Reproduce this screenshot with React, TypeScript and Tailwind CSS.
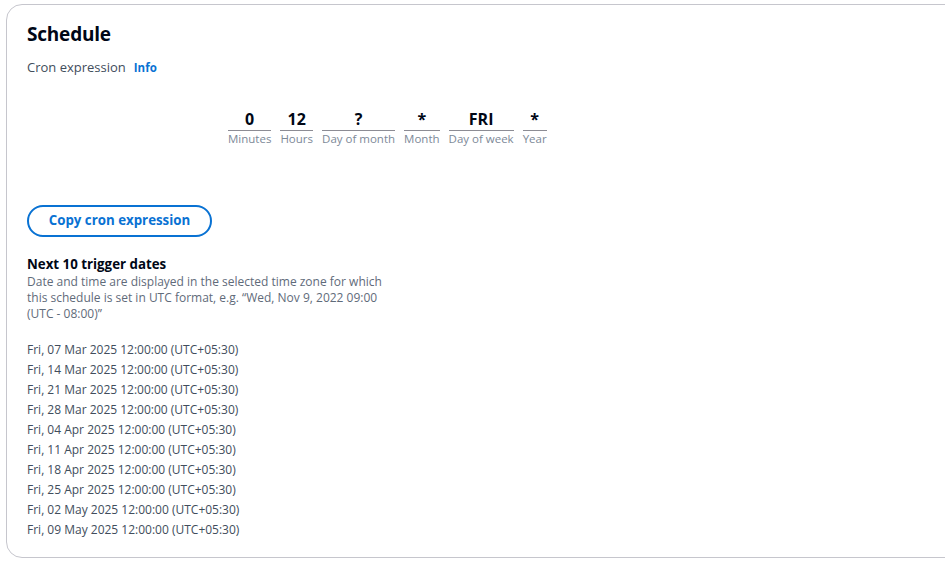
const fields = [
  { value: "0", label: "Minutes" },
  { value: "12", label: "Hours" },
  { value: "?", label: "Day of month" },
  { value: "*", label: "Month" },
  { value: "FRI", label: "Day of week" },
  { value: "*", label: "Year" },
];

const dates = [
  "Fri, 07 Mar 2025 12:00:00 (UTC+05:30)",
  "Fri, 14 Mar 2025 12:00:00 (UTC+05:30)",
  "Fri, 21 Mar 2025 12:00:00 (UTC+05:30)",
  "Fri, 28 Mar 2025 12:00:00 (UTC+05:30)",
  "Fri, 04 Apr 2025 12:00:00 (UTC+05:30)",
  "Fri, 11 Apr 2025 12:00:00 (UTC+05:30)",
  "Fri, 18 Apr 2025 12:00:00 (UTC+05:30)",
  "Fri, 25 Apr 2025 12:00:00 (UTC+05:30)",
  "Fri, 02 May 2025 12:00:00 (UTC+05:30)",
  "Fri, 09 May 2025 12:00:00 (UTC+05:30)",
];

export default function App() {
  return (
    <div
      className="w-[945px] h-[571px] bg-white overflow-hidden pt-[4px] pl-[6px]"
      style={{ fontFamily: '"Open Sans", "Noto Sans", sans-serif' }}
    >
      <div className="w-[960px] h-[554px] rounded-[16px] border border-[#c6c6cd] bg-white pl-[20px] pt-[16px]">
        {/* Header */}
        <h2 className="text-[19px] leading-[26px] font-bold text-[#000716] tracking-[-0.2px]">
          Schedule
        </h2>
        <div className="mt-[12px] flex items-center gap-[8px] h-[18px]">
          <span className="text-[13px] text-[#414d5c]">Cron expression</span>
          <span className="text-[11.5px] font-bold text-[#0972d3]">Info</span>
        </div>

        {/* Cron fields */}
        <div className="mt-[32px] ml-[201px] flex gap-[9px]">
          {fields.map((f) => (
            <div key={f.label} className="flex flex-col items-stretch">
              <div className="text-[16px] leading-[20px] font-bold text-[#000716] text-center border-b border-[#8c8c94] pb-[1px]">
                {f.value}
              </div>
              <div className="text-[11.5px] leading-[16px] text-[#7d8998] whitespace-nowrap">
                {f.label}
              </div>
            </div>
          ))}
        </div>

        {/* Copy button */}
        <button className="mt-[58px] h-[32px] w-[185px] rounded-full border-2 border-[#0972d3] text-[#0972d3] text-[13.3px] font-bold">
          Copy cron expression
        </button>

        {/* Trigger dates */}
        <div className="mt-[18px]">
          <div className="text-[13.3px] leading-[18px] font-bold text-[#000716]">
            Next 10 trigger dates
          </div>
          <p className="mt-[1px] w-[370px] text-[12px] leading-[16px] text-[#5f6b7a]">
            Date and time are displayed in the selected time zone for which
            this schedule is set in UTC format, e.g. “Wed, Nov 9, 2022 09:00
            (UTC - 08:00)”
          </p>
          <ul className="mt-[18px]">
            {dates.map((d) => (
              <li key={d} className="text-[12px] leading-[20px] text-[#414d5c]">
                {d}
              </li>
            ))}
          </ul>
        </div>
      </div>
    </div>
  );
}
